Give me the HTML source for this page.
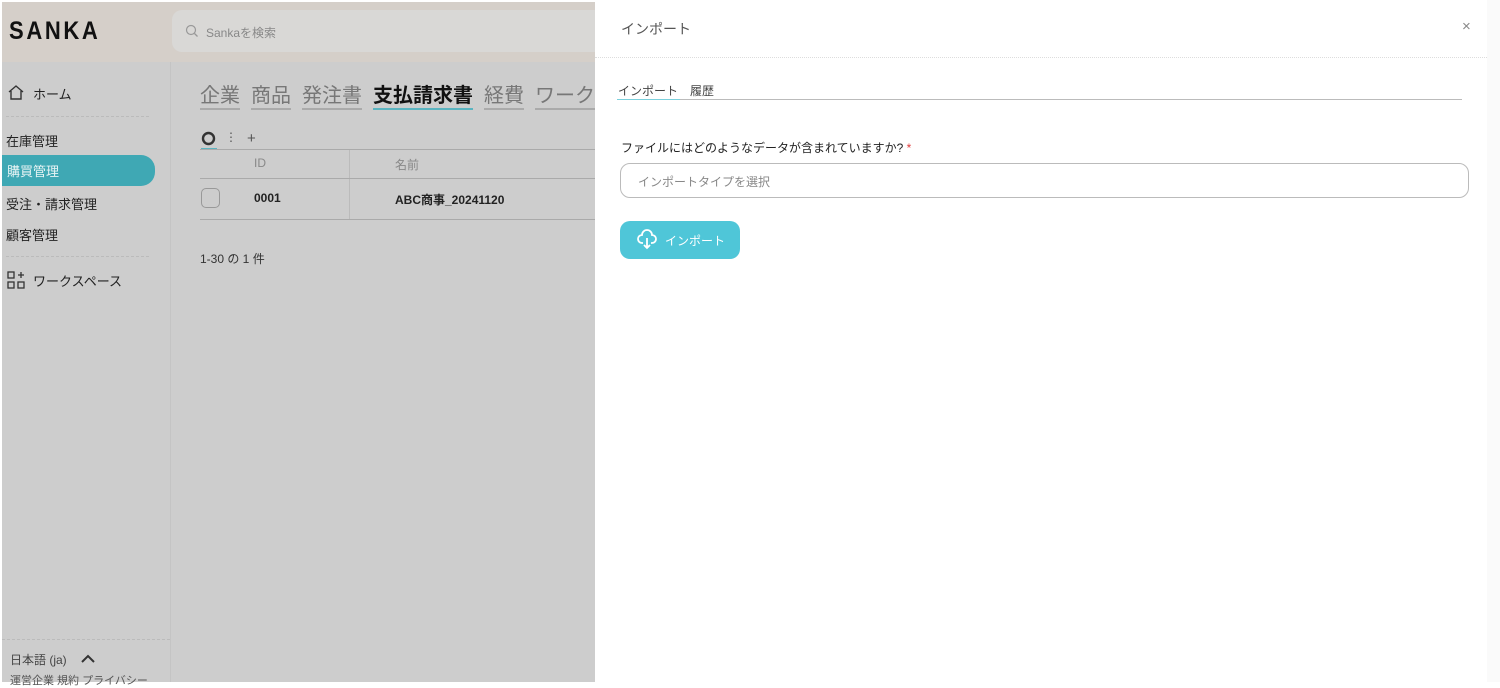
<!DOCTYPE html>
<html><head><meta charset="utf-8"><style>
*{box-sizing:border-box;margin:0;padding:0}
body{width:1500px;height:682px;overflow:hidden;background:#fff;font-family:"Liberation Sans","Noto Sans CJK JP",sans-serif;position:relative}
.ov{position:absolute;left:2px;top:2px;width:593px;height:680px;background:#cdcdcd;overflow:hidden}
.hdr{position:absolute;left:2px;top:2px;width:593px;height:60px;background:#d5cfc9}
.logo{position:absolute;left:9px;top:17px;font-size:25px;font-weight:bold;letter-spacing:3px;color:#111;transform:scaleX(0.88);transform-origin:left}
.search{position:absolute;left:172px;top:10px;width:423px;height:42px;background:#d9d8d6;border-radius:10px 0 0 10px;font-size:12px;color:#888;padding:14px 0 0 34px}
.side{position:absolute;left:2px;top:62px;width:169px;height:620px;border-right:1px solid #c4c4c4}
.si{position:absolute;left:6px;font-size:13px;color:#222;white-space:nowrap}
.dash{position:absolute;left:6px;width:143px;border-top:1px dashed #bbb}
.act{position:absolute;left:2px;top:155px;width:153px;height:31px;background:#3fa8b4;border-radius:0 14px 14px 0;color:#e8f4f5;font-size:13px;padding:6px 0 0 5px}
.tabs{position:absolute;left:200px;top:79px;font-size:20px;color:#777;white-space:nowrap;width:395px;overflow:hidden;height:32px}
.tabs span{margin-right:11px;border-bottom:2px solid #aaa;padding-bottom:1px}
.tabs span.a{color:#111;border-color:#5ab4c0;font-weight:bold}
.t{position:absolute;font-size:12px;color:#222;white-space:nowrap}
.line{position:absolute;left:200px;width:395px;border-top:1px solid #aaa}
.panel{position:absolute;left:595px;top:0;width:892px;height:682px;background:#fff}
.rstrip{position:absolute;left:1487px;top:0;width:13px;height:682px;background:#fafafa}
</style></head><body>
<div class="ov"></div>
<div class="hdr"></div>
<div class="logo">SANKA</div>
<div class="search"><svg style="position:absolute;left:13px;top:14px" width="14" height="14" viewBox="0 0 14 14"><circle cx="6" cy="6" r="4.5" fill="none" stroke="#999" stroke-width="1.2"/><path d="M9.5 9.5L12.5 12.5" stroke="#999" stroke-width="1.3"/></svg>Sankaを検索</div>
<div class="side"></div>
<svg style="position:absolute;left:7px;top:84px" width="18" height="17" viewBox="0 0 18 17"><path d="M2 8L9 2L16 8M4 7V15H14V7" fill="none" stroke="#333" stroke-width="1.4"/></svg>
<div class="si" style="left:33px;top:84px">ホーム</div>
<div class="dash" style="top:116px"></div>
<div class="si" style="top:131px">在庫管理</div>
<div class="act">購買管理</div>
<div class="si" style="top:194px">受注・請求管理</div>
<div class="si" style="top:225px">顧客管理</div>
<div class="dash" style="top:256px"></div>
<svg style="position:absolute;left:7px;top:271px" width="18" height="18" viewBox="0 0 18 18" fill="none" stroke="#333" stroke-width="1.3"><rect x="1" y="1" width="6" height="6"/><rect x="1" y="11" width="6" height="6"/><rect x="11" y="11" width="6" height="6"/><path d="M14 1V7M11 4H17"/></svg>
<div class="si" style="left:33px;top:271px">ワークスペース</div>
<div class="dash" style="top:639px;left:2px;width:168px"></div>
<div class="si" style="left:10px;top:651px;font-size:12px;color:#444">日本語 (ja)</div>
<svg style="position:absolute;left:80px;top:654px" width="16" height="10" viewBox="0 0 16 10"><path d="M2 8L8 2L14 8" fill="none" stroke="#333" stroke-width="2"/></svg>
<div class="si" style="left:10px;top:672px;font-size:11px;color:#555">運営企業 規約 プライバシー</div>
<div class="tabs"><span>企業</span><span>商品</span><span>発注書</span><span class="a">支払請求書</span><span>経費</span><span>ワーク</span></div>
<svg style="position:absolute;left:201px;top:131px" width="16" height="16" viewBox="0 0 16 16"><circle cx="7.5" cy="7.5" r="5.5" fill="none" stroke="#333" stroke-width="2.4"/></svg>
<div style="position:absolute;left:201px;top:148px;width:16px;border-top:2px solid #5ab4c0"></div>
<div class="t" style="left:225px;top:130px;color:#555">⋮</div>
<div class="t" style="left:247px;top:130px;font-size:15px;color:#555">+</div>
<div class="line" style="top:149px"></div>
<div class="t" style="left:254px;top:156px;color:#888">ID</div>
<div class="t" style="left:395px;top:156px;color:#888">名前</div>
<div style="position:absolute;left:349px;top:150px;height:70px;border-left:1px solid #bbb"></div>
<div class="line" style="top:178px"></div>
<div style="position:absolute;left:201px;top:188px;width:19px;height:20px;border:1.5px solid #999;border-radius:5px"></div>
<div class="t" style="left:254px;top:191px;font-weight:bold">0001</div>
<div class="t" style="left:395px;top:191px;font-weight:bold">ABC商事_20241120</div>
<div class="line" style="top:219px"></div>
<div class="t" style="left:200px;top:250px;color:#333">1-30 の 1 件</div>
<div class="panel"></div>
<div class="rstrip"></div>
<div class="t" style="left:621px;top:19px;font-size:14px;color:#555">インポート</div>
<div class="t" style="left:1462px;top:18px;font-size:15px;color:#888">×</div>
<div style="position:absolute;left:595px;top:57px;width:892px;border-top:1px dotted #ddd"></div>
<div class="t" style="left:618px;top:82px;color:#444">インポート</div>
<div class="t" style="left:690px;top:82px;color:#444">履歴</div>
<div style="position:absolute;left:617px;top:99px;width:845px;border-top:1px solid #bbb"></div>
<div style="position:absolute;left:617px;top:99px;width:63px;border-top:1.5px solid #7cd0dc"></div>
<div class="t" style="left:621px;top:139px;color:#222">ファイルにはどのようなデータが含まれていますか? <span style="color:#e03c3c">*</span></div>
<div style="position:absolute;left:620px;top:163px;width:849px;height:35px;border:1px solid #bbb;border-radius:10px;font-size:12px;color:#888;padding:9px 0 0 17px">インポートタイプを選択</div>
<div style="position:absolute;left:620px;top:221px;width:120px;height:38px;background:#4fc6d8;border-radius:10px;color:#fff;font-size:12px;padding:11px 0 0 45px">インポート</div>
<svg style="position:absolute;left:637px;top:229px" width="20" height="22" viewBox="0 0 20 22" fill="none" stroke="#fff" stroke-width="1.8"><path d="M6 14H5A4 4 0 0 1 5 6A5 5 0 0 1 15 6A4 4 0 0 1 15 14H14"/><path d="M10 9V19M7 16L10 19L13 16"/></svg>
</body></html>
